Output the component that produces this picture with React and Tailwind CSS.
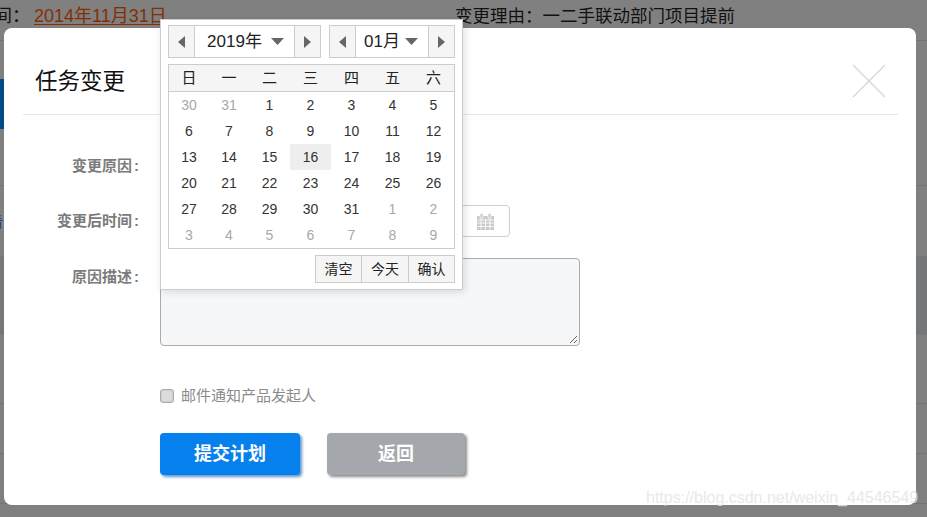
import React from "react";

const FONT = { fontFamily: '"Liberation Sans", "Noto Sans CJK SC", sans-serif' };

const rows = [
  [["30", 1], ["31", 1], ["1"], ["2"], ["3"], ["4"], ["5"]],
  [["6"], ["7"], ["8"], ["9"], ["10"], ["11"], ["12"]],
  [["13"], ["14"], ["15"], ["16", 0, 1], ["17"], ["18"], ["19"]],
  [["20"], ["21"], ["22"], ["23"], ["24"], ["25"], ["26"]],
  [["27"], ["28"], ["29"], ["30"], ["31"], ["1", 1], ["2", 1]],
  [["3", 1], ["4", 1], ["5", 1], ["6", 1], ["7", 1], ["8", 1], ["9", 1]],
];

function Arrow({ dir }) {
  return (
    <svg width="7" height="12" viewBox="0 0 7 12">
      <path d={dir === "left" ? "M7 0V12L0 6Z" : "M0 0V12L7 6Z"} fill="#666" />
    </svg>
  );
}

function Caret() {
  return (
    <svg width="13" height="7" viewBox="0 0 13 7">
      <path d="M0 0H13L6.5 7Z" fill="#666" />
    </svg>
  );
}

function NavButton({ dir, side }) {
  return (
    <div className={`w-[26px] h-full flex items-center justify-center bg-[#f5f5f5] border-[#ccc] ${side}`}>
      <Arrow dir={dir} />
    </div>
  );
}

function Picker() {
  return (
    <div className="absolute left-[160px] top-[19px] w-[303px] h-[271px] bg-white border border-[#ccc] shadow-[2px_2px_8px_rgba(0,0,0,0.12)] px-[7px] pt-[5px] text-[#333]">
      <div className="flex justify-between h-[33px]">
        <div className="w-[153px] h-full flex border border-[#ccc]">
          <NavButton dir="left" side="border-r" />
          <div className="flex-1 flex items-center justify-center gap-[9px] text-[17px] text-[#222] pl-[2px]">
            <span>2019年</span>
            <Caret />
          </div>
          <NavButton dir="right" side="border-l" />
        </div>
        <div className="w-[126px] h-full flex border border-[#ccc]">
          <NavButton dir="left" side="border-r" />
          <div className="flex-1 flex items-center justify-center gap-[5px] text-[17px] text-[#222] pr-[2px]">
            <span>01月</span>
            <Caret />
          </div>
          <NavButton dir="right" side="border-l" />
        </div>
      </div>
      <div className="mt-[6px] w-[287px] border border-[#ccc]">
        <div className="grid grid-cols-[40px_40px_41px_41px_41px_41px_41px] h-[27px] bg-[#f5f5f5] border-b border-[#ccc] text-[15px] text-[#222]">
          {["日", "一", "二", "三", "四", "五", "六"].map((d) => (
            <div key={d} className="flex items-center justify-center">{d}</div>
          ))}
        </div>
        {rows.map((r, i) => (
          <div key={i} className="grid grid-cols-[40px_40px_41px_41px_41px_41px_41px] h-[26px] text-[14px]">
            {r.map(([n, muted, active], j) => (
              <div
                key={j}
                className={`flex items-center justify-center ${muted ? "text-[#a8a8a8]" : "text-[#333]"} ${active ? "bg-[#eeeeee]" : ""}`}
              >
                {n}
              </div>
            ))}
          </div>
        ))}
      </div>
      <div className="mt-[6px] flex justify-end">
        <div className="flex h-[28px] border border-[#ccc] bg-[#f5f5f5] text-[14px] text-[#222]">
          <div className="w-[46px] flex items-center justify-center border-r border-[#ccc]">清空</div>
          <div className="w-[47px] flex items-center justify-center border-r border-[#ccc]">今天</div>
          <div className="w-[45px] flex items-center justify-center">确认</div>
        </div>
      </div>
    </div>
  );
}

function Label({ children }) {
  return (
    <div className="w-[135px] shrink-0 text-right text-[15px] font-bold text-[#7b7b7b] leading-[20px]">
      {children}
      <span className="ml-[2px]">:</span>
    </div>
  );
}

function CalendarIcon() {
  return (
    <svg width="17" height="17" viewBox="0 0 17 17">
      <path d="M0 3H17V17H0Z" fill="#c9c9c9" />
      <path d="M3 0.5H6V5H3ZM11 0.5H14V5H11Z" fill="#c9c9c9" stroke="#fff" strokeWidth="0.8" />
      <path d="M0.5 7H16.5M0.5 10H16.5M0.5 13.5H16.5M4 6V16.5M8.5 6V16.5M13 6V16.5" stroke="#fff" strokeWidth="0.9" />
    </svg>
  );
}

export default function App() {
  return (
    <div className="relative w-[927px] h-[517px] overflow-hidden bg-[#808080]" style={FONT}>
      {/* page behind the overlay */}
      <div className="flex flex-col">
        <div className="h-[41px] border-b border-[#747474] flex items-start pt-[6px] text-[18px] text-[#111] leading-[20px] whitespace-nowrap">
          <span className="w-[34px] -indent-[6px]">{"间\uFF1A"}</span>
          <span className="w-[421px] text-[#822f05] underline underline-offset-2">2014年11月31日</span>
          <span className="text-[17.5px]">{"变更理由\uFF1A一二手联动部门项目提前"}</span>
        </div>
        <div className="h-[145px] border-b border-[#747474] pt-[38px]">
          <div className="w-[4px] h-[50px] bg-[#034a87]" />
        </div>
        <div className="h-[70px] pt-[28px] overflow-hidden">
          <div className="-ml-[11px] text-[14px] text-[#1d3f77] leading-[16px]">看</div>
        </div>
        <div className="h-[79px] bg-[#757779]" />
        <div className="h-[69px] border-b border-[#747474]" />
        <div className="h-[50px] border-b border-[#747474]" />
        <div className="h-[50px] border-b border-[#747474]" />
      </div>

      {/* modal */}
      <div className="absolute left-[4px] top-[28px] w-[912px] h-[477px] bg-white rounded-[8px] flex flex-col">
        <div className="relative ml-[19px] mr-[18px] h-[87px] border-b border-[#e6e6f2] flex items-center">
          <h2 className="ml-[12px] mt-[21px] text-[22.5px] leading-[32px] font-normal text-[#111]">任务变更</h2>
          <svg className="absolute left-[829px] top-[36px]" width="34" height="34" viewBox="0 0 34 34">
            <path d="M1 1L33 33M33 1L1 33" stroke="#d6d6d6" strokeWidth="1.3" fill="none" />
          </svg>
        </div>
        <div className="flex mt-[41px] h-[20px]">
          <Label>变更原因</Label>
        </div>
        <div className="flex mt-[35px] h-[20px] items-center">
          <Label>变更后时间</Label>
          <div className="ml-[21px] w-[350px] h-[32px] border border-[#cfcfcf] rounded-[4px] flex items-center justify-end pr-[15px]">
            <CalendarIcon />
          </div>
        </div>
        <div className="flex mt-[27px]">
          <div className="pt-[9px]">
            <Label>原因描述</Label>
          </div>
          <div className="ml-[21px] relative w-[420px] h-[88px] bg-[#f6f7f9] border border-[#aaaaaa] rounded-[4px]">
            <svg className="absolute right-[1px] bottom-[1px]" width="9" height="9" viewBox="0 0 9 9">
              <path d="M1 8L8 1M5 8L8 5" stroke="#555" strokeWidth="0.9" />
            </svg>
          </div>
        </div>
        <div className="flex items-center mt-[42px] ml-[156px] h-[16px]">
          <span className="w-[14px] h-[14px] rounded-[3px] border border-[#aaa] bg-[#dcdcdc] shadow-[inset_0_0_2px_rgba(0,0,0,0.2)]" />
          <span className="ml-[7px] text-[15px] text-[#8a8a8a]">邮件通知产品发起人</span>
        </div>
        <div className="flex ml-[156px] mt-[29px] gap-[27px]">
          <button className="w-[140px] h-[42px] rounded-[4px] bg-[#0680ec] text-white text-[18px] font-bold shadow-[2px_2px_3px_rgba(10,90,170,0.65)]">
            提交计划
          </button>
          <button className="w-[138px] h-[42px] rounded-[4px] bg-[#a4a7ab] text-white text-[18px] font-bold shadow-[2px_2px_3px_rgba(90,90,90,0.7)]">
            返回
          </button>
        </div>
      </div>

      <Picker />

      {/* watermark */}
      <div className="absolute left-[646px] top-[488px] text-[16px] leading-[20px] whitespace-nowrap text-[#e4e4e4] opacity-80">
        https://blog.csdn.net/weixin_44546549
      </div>
    </div>
  );
}
